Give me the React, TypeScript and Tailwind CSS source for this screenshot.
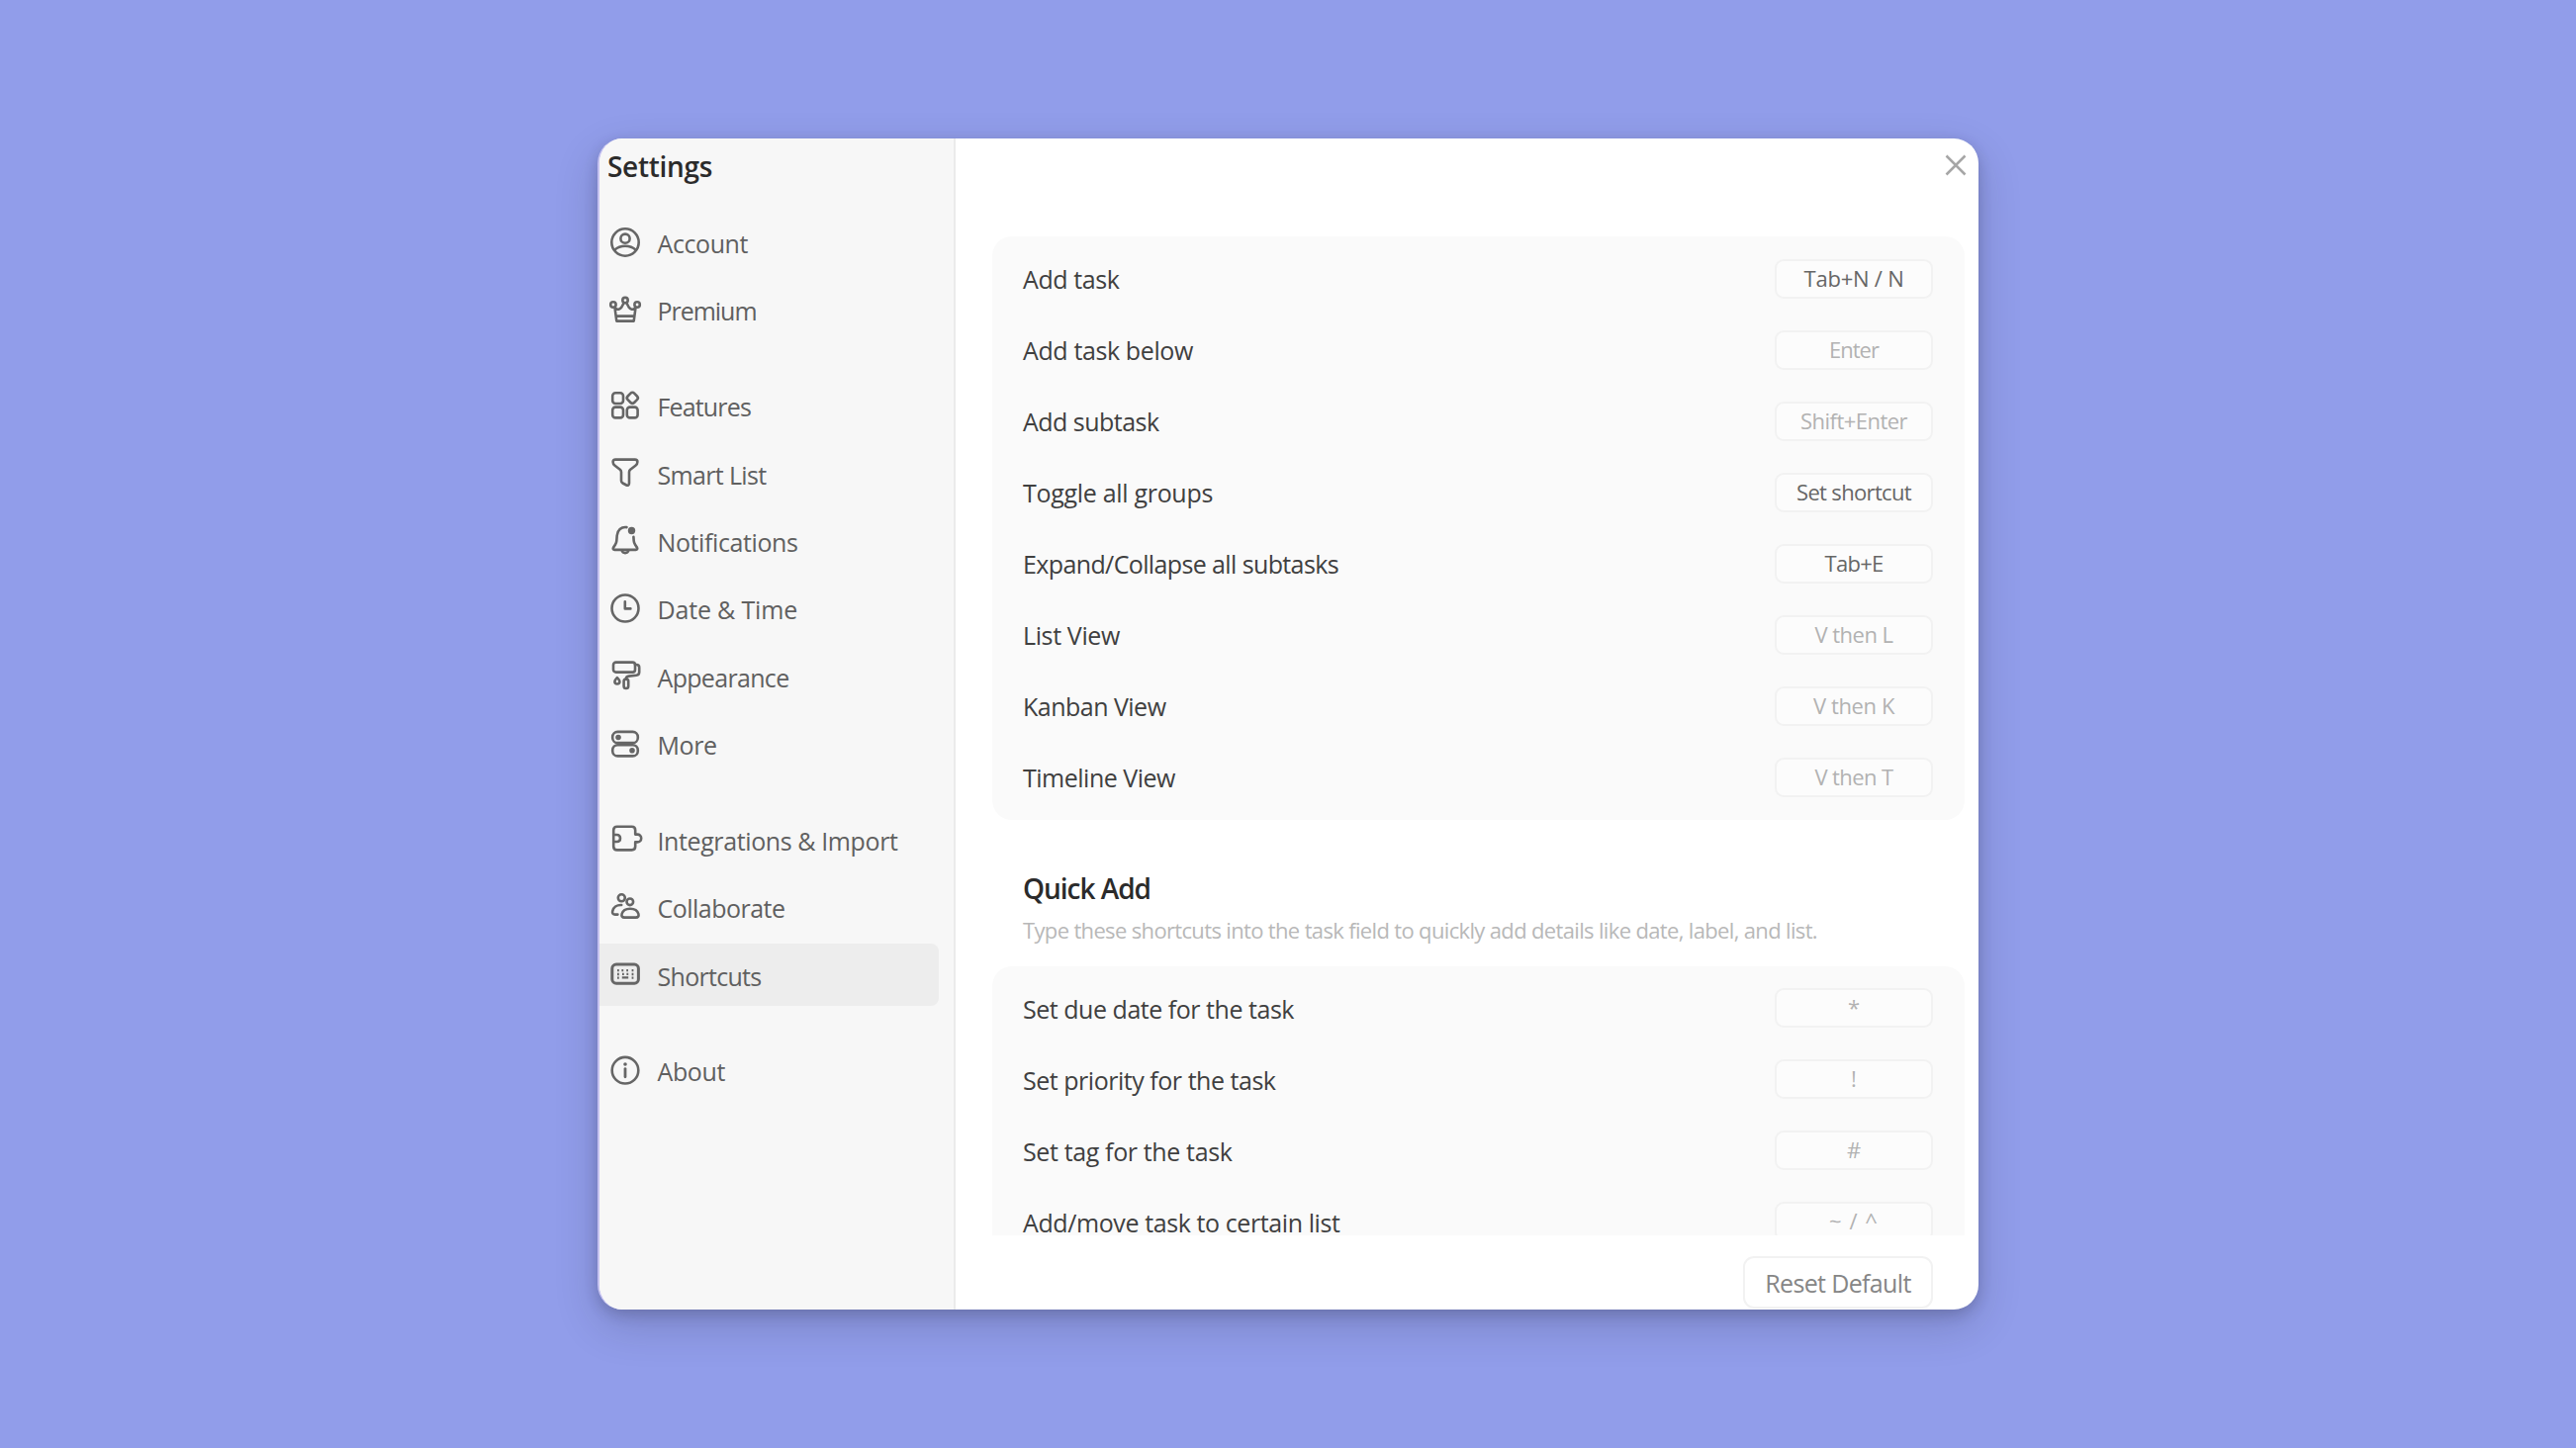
import { useLayoutEffect, useRef, useState, type ReactNode } from "react";

/* Text whose tracking is adjusted so that the line takes the given width. */
function Label({ text, width, className = "" }: { text: string; width?: number; className?: string }) {
  const ref = useRef<HTMLSpanElement>(null);
  const [spacing, setSpacing] = useState(0);
  useLayoutEffect(() => {
    if (!ref.current || !width) return;
    const natural = ref.current.getBoundingClientRect().width;
    setSpacing((width - natural) / text.length);
  }, [text, width]);
  return (
    <span ref={ref} className={`inline-block whitespace-pre ${className}`} style={{ letterSpacing: `${spacing}px` }}>
      {text}
    </span>
  );
}

function Icon({ children }: { children: ReactNode }) {
  return (
    <svg
      viewBox="0 0 32 32"
      className="size-8 shrink-0 overflow-visible"
      fill="none"
      stroke="#666666"
      strokeWidth="2.6"
      strokeLinecap="round"
      strokeLinejoin="round"
    >
      {children}
    </svg>
  );
}

const icons = {
  account: (
    <Icon>
      <circle cx="16" cy="16" r="13.7" />
      <circle cx="16" cy="12.2" r="4.6" />
      <path d="M5.2 23.8C8.3 20.9 12 19.8 16 19.8s7.700 1.100 10.800 4" />
    </Icon>
  ),
  crown: (
    <Icon>
      <path d="M5.500 14.200 7.300 27.600h17.400l1.800-13.400M6 14.600c2.400 1.900 4.800 1.300 6.400-1.100l2.300-4.300M26 14.600c-2.400 1.900-4.800 1.300-6.400-1.100l-2.300-4.300M7 22.600h18" />
      <circle cx="16" cy="6.600" r="2.700" />
      <circle cx="3.900" cy="11" r="2.700" />
      <circle cx="28.100" cy="11" r="2.700" />
    </Icon>
  ),
  features: (
    <Icon>
      <rect x="3.200" y="3.200" width="10.800" height="10.800" rx="3" />
      <rect x="3.200" y="17.600" width="10.800" height="10.800" rx="3" />
      <rect x="17.800" y="17.600" width="10.800" height="10.800" rx="3" />
      <rect x="18.700" y="3.700" width="9.200" height="9.200" rx="2.600" transform="rotate(45 23.300 8.300)" />
    </Icon>
  ),
  filter: (
    <Icon>
      <path d="M6.200 2.600h19.600c1.700 0 2.600 1 2.600 2.400 0 1.900-.8 2.900-2 3.800l-5.200 4c-.8.7-1.200 1.400-1.200 2.500v11.200c0 1.900-1.200 2.700-2.700 2l-3.800-2c-1-.5-1.500-1.200-1.500-2.400v-8.800c0-1.100-.4-1.800-1.200-2.500l-5.200-4c-1.200-.9-2-1.900-2-3.800 0-1.400.9-2.400 2.600-2.400Z" />
    </Icon>
  ),
  bell: (
    <Icon>
      <path d="M17.500 3.100C12 2.300 8 6.300 7.700 11.500l-.4 5.400c-.1 1.500-.6 2.500-1.400 3.800l-1.800 2.800c-.8 1.300-.2 2.400 1.200 2.400h21.400c1.400 0 2-1.100 1.200-2.400l-1.800-2.800c-.8-1.300-1.300-2.300-1.400-3.800l-.3-4" />
      <path d="M12.600 26.500c.5 1.700 1.700 2.600 3.400 2.600s2.900-.9 3.400-2.600" />
      <circle cx="22.500" cy="6.500" r="3.700" fill="#666666" stroke="none" />
    </Icon>
  ),
  clock: (
    <Icon>
      <circle cx="16" cy="16" r="13.500" />
      <path d="M15.800 9.200v7.200h5.600" />
    </Icon>
  ),
  roller: (
    <Icon>
      <rect x="4" y="2.600" width="22" height="10" rx="2.600" />
      <path d="M26 5h1.400c1.600 0 2.800 1.200 2.800 2.800v4.800c0 1.800-1 3-2.800 3.200l-7.800.8c-1.800.2-2.700 1-2.700 2.800" />
      <rect x="14.600" y="19.600" width="4.600" height="9.400" rx="2.200" />
      <path d="M7.900 18.200c1.700 1.800 2.500 2.800 2.500 3.800a2.500 2.500 0 0 1-5 0c0-1 .8-2 2.500-3.800Z" />
    </Icon>
  ),
  toggles: (
    <Icon>
      <rect x="3.200" y="3.900" width="25.600" height="11.200" rx="5.200" />
      <rect x="3.200" y="17.200" width="25.600" height="11.200" rx="5.200" />
      <circle cx="9" cy="9.500" r="2.800" fill="#666666" stroke="none" />
      <circle cx="23" cy="22.800" r="2.800" fill="#666666" stroke="none" />
    </Icon>
  ),
  puzzle: (
    <Icon>
      <path d="M4.200 12V7.400c0-2.400 1.200-3.600 3.600-3.600h14.800c2.400 0 3.600 1.200 3.600 3.600v4.200h2.200c2 0 3.800 1.600 3.800 3.900s-1.800 3.900-3.800 3.900h-2.200v4.400c0 2.400-1.200 3.600-3.600 3.600H7.800c-2.400 0-3.600-1.200-3.600-3.600V12h3.400c2 0 3.400 1.500 3.400 3.500S9.600 19 7.600 19H4.200" />
    </Icon>
  ),
  people: (
    <Icon>
      <circle cx="12.300" cy="6.800" r="3.500" />
      <circle cx="20.800" cy="10.800" r="3.300" />
      <path d="M12.200 14c-4.800-.2-8.200 2.500-9 6.200-.5 2.300.5 3.400 2.600 3.400h2.600" />
      <path d="M21 17.800c4.600 0 7.500 2.100 8.400 5.200.6 2.200-.4 3.600-2.600 3.600H15.200c-2.200 0-3.200-1.400-2.600-3.600.9-3.100 3.800-5.200 8.400-5.200Z" />
    </Icon>
  ),
  keyboard: (
    <Icon>
      <rect x="2.800" y="6" width="26.600" height="19.200" rx="4.200" strokeWidth="3" />
      <path
        d="M8 12.200h1.800M12.400 12.200h1.800M17.200 12.200H19M22.600 12.200h1.800M8 16h1.800M13 15.800h1.800M17.400 15.800h1.800M22.600 16h1.800M8 19.600h1.800M12.800 19.300h6.400M22.600 19.600h1.800"
        strokeWidth="2.300"
        strokeLinecap="butt"
      />
    </Icon>
  ),
  info: (
    <Icon>
      <circle cx="16" cy="16.200" r="13.300" />
      <path d="M16 14.600v8.200" strokeWidth="2.800" />
      <circle cx="16" cy="10" r="1.800" fill="#666666" stroke="none" />
    </Icon>
  ),
};

type NavItem = { icon: ReactNode; label: string; width: number; active?: boolean };

const navGroups: NavItem[][] = [
  [
    { icon: icons.account, label: "Account", width: 91.5 },
    { icon: icons.crown, label: "Premium", width: 100 },
  ],
  [
    { icon: icons.features, label: "Features", width: 94.5 },
    { icon: icons.filter, label: "Smart List", width: 110 },
    { icon: icons.bell, label: "Notifications", width: 142 },
    { icon: icons.clock, label: "Date & Time", width: 141.5 },
    { icon: icons.roller, label: "Appearance", width: 133 },
    { icon: icons.toggles, label: "More", width: 60 },
  ],
  [
    { icon: icons.puzzle, label: "Integrations & Import", width: 243 },
    { icon: icons.people, label: "Collaborate", width: 129 },
    { icon: icons.keyboard, label: "Shortcuts", width: 105, active: true },
  ],
  [{ icon: icons.info, label: "About", width: 68.5 }],
];

type Shortcut = { label: string; width: number; keys: string; keysWidth?: number; editable?: boolean };

const taskShortcuts: Shortcut[] = [
  { label: "Add task", width: 97.5, keys: "Tab+N / N", keysWidth: 101, editable: true },
  { label: "Add task below", width: 172, keys: "Enter", keysWidth: 50 },
  { label: "Add subtask", width: 137.5, keys: "Shift+Enter", keysWidth: 108 },
  { label: "Toggle all groups", width: 192, keys: "Set shortcut", keysWidth: 116, editable: true },
  { label: "Expand/Collapse all subtasks", width: 319, keys: "Tab+E", keysWidth: 59, editable: true },
  { label: "List View", width: 98, keys: "V then L", keysWidth: 79 },
  { label: "Kanban View", width: 144.5, keys: "V then K", keysWidth: 82 },
  { label: "Timeline View", width: 154, keys: "V then T", keysWidth: 79 },
];

const quickAddShortcuts: Shortcut[] = [
  { label: "Set due date for the task", width: 274, keys: "*" },
  { label: "Set priority for the task", width: 255.5, keys: "!" },
  { label: "Set tag for the task", width: 211.5, keys: "#" },
  { label: "Add/move task to certain list", width: 320.5, keys: "~ / ^", keysWidth: 50 },
];

function ShortcutGroup({ items }: { items: Shortcut[] }) {
  return (
    <div className="rounded-[20px] bg-[#fafafa] py-[7px] pr-8 pl-[31px]">
      {items.map((item) => (
        <div key={item.label} className="flex h-[71.950px] items-center justify-between">
          <Label text={item.label} width={item.width} className="pt-px text-[25px] leading-9 text-[#404040]" />
          <div
            className={`flex h-10 w-40 items-center justify-center rounded-[9px] border-2 border-[#f2f2f2] bg-[#fcfcfc] pb-0.5 text-[22px] leading-8 ${
              item.editable ? "text-[#666666]" : "text-[#b2b2b2]"
            }`}
          >
            <Label text={item.keys} width={item.keysWidth} />
          </div>
        </div>
      ))}
    </div>
  );
}

export default function App() {
  return (
    <div className="flex h-[1464px] w-[2604px] justify-center bg-[#919dea] pt-[140px] font-['Open_Sans','Noto_Sans',sans-serif]">
      <div className="flex h-[1184px] w-[1396px] overflow-hidden rounded-[25px] border-l-2 border-[#c5c2f0] bg-white shadow-[0_16px_44px_rgba(30,30,50,0.2),0_5px_14px_rgba(30,30,50,0.2)]">
        <aside className="w-[360px] shrink-0 border-r-2 border-[#ebebeb] bg-[#f7f7f7]">
          <h1 className="flex h-[70.400px] pt-[9px] pl-2 text-[28px] leading-[38px] font-semibold text-[#2b2b2b]">
            <Label text="Settings" width={106} />
          </h1>
          <nav className="flex flex-col gap-[28.300px]">
            {navGroups.map((group, index) => (
              <div key={index}>
                {group.map((item) => (
                  <div key={item.label} className="flex h-[68.400px] items-center pr-[15px]">
                    <div
                      className={`flex h-[63px] w-full items-center gap-[16.500px] rounded-r-[8px] pl-[10px] ${
                        item.active ? "bg-[#ededed]" : ""
                      }`}
                    >
                      {item.icon}
                      <Label text={item.label} width={item.width} className="pt-[3px] text-[25px] leading-9 text-[#606060]" />
                    </div>
                  </div>
                ))}
              </div>
            ))}
          </nav>
        </aside>

        <main className="flex min-w-0 flex-1 flex-col">
          <header className="flex h-[99px] shrink-0 items-start justify-end pt-4 pr-3">
            <svg viewBox="0 0 22 22" className="size-[22px]" fill="none" stroke="#a6a6a6" strokeWidth="2.500">
              <path d="M1.500 1.500 20.500 20.500M20.500 1.500 1.500 20.500" />
            </svg>
          </header>
          <div className="h-[1010px] shrink-0 overflow-hidden pr-[14px] pl-[37px]">
            <ShortcutGroup items={taskShortcuts} />
            <div className="flex h-[148px] flex-col pt-[50px] pl-[31px]">
              <h2 className="h-[45px] text-[28px] leading-[38px] font-semibold text-[#2b2b2b]">
                <Label text="Quick Add" width={129} />
              </h2>
              <p className="text-[22px] leading-8 text-[#b8b8b8]">
                <Label
                  text="Type these shortcuts into the task field to quickly add details like date, label, and list."
                  width={803}
                />
              </p>
            </div>
            <ShortcutGroup items={quickAddShortcuts} />
          </div>
          <footer className="flex justify-end pt-[21px] pr-[46px]">
            <div className="flex h-[53px] w-48 items-center justify-center rounded-[11px] border-2 border-[#f2f2f2] text-[25px] leading-9 text-[#868686]">
              <Label text="Reset Default" width={147.5} />
            </div>
          </footer>
        </main>
      </div>
    </div>
  );
}
